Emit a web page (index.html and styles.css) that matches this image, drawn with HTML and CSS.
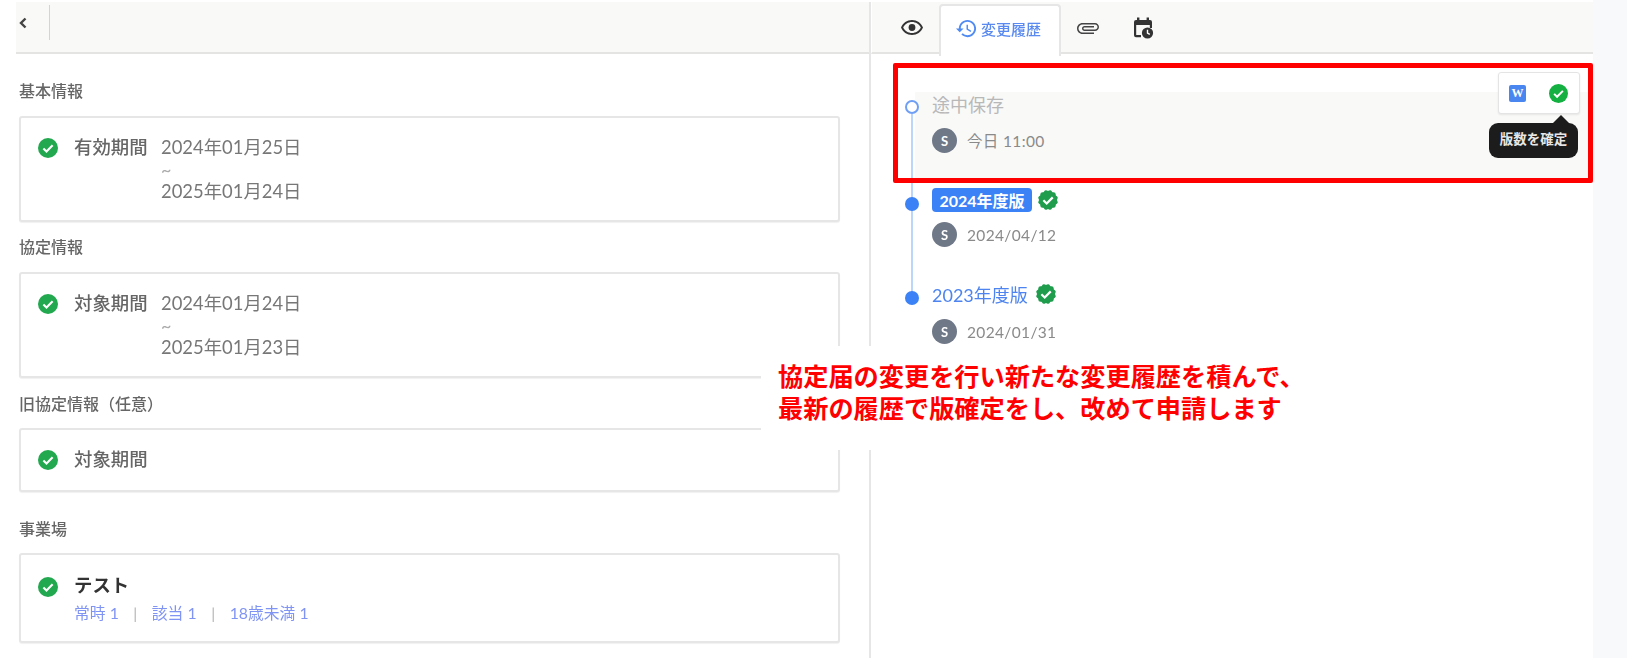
FILE: index.html
```html
<!DOCTYPE html>
<html lang="ja">
<head>
<meta charset="utf-8">
<title>変更履歴</title>
<link rel="stylesheet" href="styles.css">
</head>
<body>
<svg class="defs" width="0" height="0" aria-hidden="true">
  <defs>
    <symbol id="check" viewBox="0 0 20 20">
      <circle cx="10" cy="10" r="10" fill="currentColor"/>
      <path d="M5.4 10.4l3.1 3 6.1-6.2" fill="none" stroke="#fff" stroke-width="2.1"/>
    </symbol>
    <symbol id="seal" viewBox="0 0 20 20">
      <g fill="#1f9d4d">
        <rect x="3" y="3" width="14" height="14" rx="2"/>
        <rect x="3" y="3" width="14" height="14" rx="2" transform="rotate(30 10 10)"/>
        <rect x="3" y="3" width="14" height="14" rx="2" transform="rotate(60 10 10)"/>
      </g>
      <path d="M5.8 10.3l3 2.9 5.5-5.6" fill="none" stroke="#fff" stroke-width="2"/>
    </symbol>
  </defs>
</svg>
<div class="page">
  <section class="left">
    <header class="left-bar">
      <svg class="chevron" viewBox="0 0 10 12" width="10" height="12"><path d="M7.5 1.5L3 6l4.5 4.5" fill="none" stroke="#444" stroke-width="2.4"/></svg>
      <span class="bar-divider"></span>
    </header>
    <div class="left-body">
      <h3 class="sec-title t1">基本情報</h3>
      <div class="card">
        <svg class="ok"><use href="#check"/></svg>
        <span class="label">有効期間</span>
        <div class="dates"><div>2024年01月25日</div><div class="tilde">~</div><div>2025年01月24日</div></div>
      </div>
      <h3 class="sec-title t2">協定情報</h3>
      <div class="card">
        <svg class="ok"><use href="#check"/></svg>
        <span class="label">対象期間</span>
        <div class="dates"><div>2024年01月24日</div><div class="tilde">~</div><div>2025年01月23日</div></div>
      </div>
      <h3 class="sec-title t3">旧協定情報（任意）</h3>
      <div class="card card-single">
        <svg class="ok"><use href="#check"/></svg>
        <span class="label">対象期間</span>
      </div>
      <h3 class="sec-title t4">事業場</h3>
      <div class="card card-site">
        <svg class="ok"><use href="#check"/></svg>
        <div class="site">
          <div class="site-name">テスト</div>
          <div class="site-meta"><span>常時 1</span><i>|</i><span>該当 1</span><i>|</i><span>18歳未満 1</span></div>
        </div>
      </div>
    </div>
  </section>
  <section class="right">
    <nav class="tabs">
      <span class="tab-icon eye"><svg viewBox="0 0 24 24" width="24" height="24"><path fill="#333" d="M12 6c3.79 0 7.17 2.13 8.82 5.5C19.17 14.87 15.79 17 12 17s-7.17-2.13-8.82-5.5C4.83 8.13 8.21 6 12 6m0-2C7 4 2.73 7.11 1 11.5 2.73 15.89 7 19 12 19s9.27-3.11 11-7.5C21.27 7.11 17 4 12 4zm0 5c1.38 0 2.5 1.12 2.5 2.5S13.38 14 12 14s-2.5-1.12-2.5-2.5S10.62 9 12 9zm0 0"/><circle cx="12" cy="11.5" r="3.4" fill="#333"/></svg></span>
      <span class="tab-active">
        <svg viewBox="0 0 24 24" width="23" height="23"><path fill="#4f8bf2" d="M13 3c-4.97 0-9 4.03-9 9H1l3.89 3.89.07.14L9 12H6c0-3.87 3.13-7 7-7s7 3.13 7 7-3.13 7-7 7c-1.93 0-3.68-.79-4.94-2.06l-1.42 1.42C8.27 19.99 10.51 21 13 21c4.97 0 9-4.03 9-9s-4.03-9-9-9zm-1 5v5l4.28 2.54.72-1.21-3.5-2.08V8H12z"/></svg>
        変更履歴
      </span>
      <span class="tab-icon clip"><svg viewBox="0 0 24 24" width="24" height="24"><path fill="#444" transform="rotate(90 12 12)" d="M16.5 6v11.5c0 2.21-1.79 4-4 4s-4-1.79-4-4V5c0-1.38 1.12-2.5 2.5-2.5s2.5 1.12 2.5 2.5v10.5c0 .55-.45 1-1 1s-1-.45-1-1V6H10v9.5c0 1.38 1.12 2.5 2.5 2.5s2.5-1.12 2.5-2.5V5c0-2.21-1.79-4-4-4S7 2.79 7 5v12.5c0 3.04 2.46 5.5 5.5 5.5s5.5-2.46 5.5-5.5V6h-1.5z"/></svg></span>
      <span class="tab-icon cal"><svg viewBox="0 0 24 24" width="24" height="24"><path fill="#333" d="M6 1.5h2.4V4h7.2V1.5H18V4h1a2 2 0 0 1 2 2v6h-2.2V9H5.2v10H10v2.2H5a2 2 0 0 1-2-2V6a2 2 0 0 1 2-2h1z"/><circle cx="16.5" cy="17" r="5.6" fill="#333"/><path d="M16.5 13.8V17l2.3 1.4" fill="none" stroke="#fff" stroke-width="1.4"/></svg></span>
    </nav>
    <div class="timeline">
      <span class="rail"></span>
      <article class="item item-draft">
        <span class="dot dot-open"></span>
        <div class="draft-title">途中保存</div>
        <div class="who"><span class="avatar">S</span><span class="when">今日 11:00</span></div>
      </article>
      <article class="item item-badge">
        <span class="dot dot-a"></span>
        <div class="ver"><span class="badge">2024年度版</span><svg class="seal"><use href="#seal"/></svg></div>
        <div class="who"><span class="avatar">S</span><span class="when">2024/04/12</span></div>
      </article>
      <article class="item item-plain">
        <span class="dot dot-b"></span>
        <div class="ver"><span class="ver-link">2023年度版</span><svg class="seal"><use href="#seal"/></svg></div>
        <div class="who"><span class="avatar">S</span><span class="when">2024/01/31</span></div>
      </article>
      <div class="red-box"></div>
      <div class="popup">
        <span class="word">W</span>
        <svg class="confirm"><use href="#check"/></svg>
      </div>
      <div class="tooltip">版数を確定</div>
    </div>
  </section>
  <aside class="gutter"></aside>
  <div class="note">協定届の変更を行い新たな変更履歴を積んで、<br>最新の履歴で版確定をし、改めて申請します</div>
</div>
</body>
</html>
```

FILE: styles.css
```css
* { box-sizing: border-box; }
html, body { margin: 0; padding: 0; height: 100%; overflow: hidden; background: #fff; }
body { font-family: Lato, "Noto Sans CJK JP", sans-serif; }
.defs { position: absolute; }

.page {
  position: relative;
  display: flex;
  width: 1627px;
  height: 658px;
  padding-top: 2px;
  padding-left: 16px;
  filter: blur(0.6px);
  overflow: hidden;
}

/* left */
.left { width: 853px; flex: none; }
.left-bar {
  display: flex;
  align-items: flex-start;
  height: 52px;
  background: #f9f9f8;
  border-bottom: 2px solid #e4e4e2;
}
.chevron { margin: 15px 0 0 2px; }
.bar-divider { width: 1px; height: 35px; margin: 3px 0 0 21px; background: #d4d4d4; }
.left-body { padding: 0 0 0 3px; }
.sec-title { margin: 0; font-size: 16px; line-height: 20px; font-weight: 500; color: #666; }
.t1 { margin-top: 27px; margin-bottom: 15px; }
.t2 { margin-top: 15px; margin-bottom: 15px; }
.t3 { margin-top: 16px; margin-bottom: 14px; }
.t4 { margin-top: 27px; margin-bottom: 14px; }

.card {
  display: flex;
  align-items: flex-start;
  width: 821px;
  padding: 18px 0 18px 17px;
  background: #fff;
  border: 2px solid #e6e6e6;
  border-radius: 3px;
  box-shadow: 0 1px 1px rgba(0, 0, 0, .06);
  font-size: 18.4px;
  line-height: 22px;
}
.card-single { height: 64px; }
.card-site { height: 90px; padding-top: 20px; }
.ok { width: 20px; height: 20px; margin: 2px 16px 0 0; color: #22a84f; flex: none; }
.label { width: 87px; flex: none; color: #666; font-weight: 500; }
.dates { color: #777; }
.tilde { font-size: 18px; line-height: 22px; color: #aaa; }
.site-name { font-size: 18.4px; line-height: 22px; margin-top: -1px; font-weight: 700; color: #333; }
.site-meta { display: flex; margin-top: 7px; font-size: 15.8px; line-height: 20px; color: #8094f4; }
.site-meta i { width: 33px; text-align: center; font-style: normal; color: #b5b5b5; }

/* right */
.right {
  position: relative;
  width: 724px;
  flex: none;
  border-left: 2px solid #e6e6e6;
}
.tabs {
  display: flex;
  align-items: flex-start;
  height: 52px;
  background: #f9f9f8;
  border-left: 1px solid #fff;
  border-bottom: 2px solid #e4e4e2;
}
.tab-icon { display: flex; margin-top: 14px; }
.eye { margin-left: 28px; }
.tab-active {
  display: flex;
  align-items: center;
  gap: 3px;
  width: 122px;
  height: 52px;
  margin: 2px 0 -2px 15px;
  padding: 0 0 5px 14px;
  background: #fff;
  border: 2px solid #e6e6e6;
  border-bottom: 0;
  border-radius: 4px 4px 0 0;
  font-size: 15px;
  font-weight: 500;
  color: #5a8af0;
}
.clip { margin-left: 15px; }
.cal { margin-left: 31px; }

.timeline { position: relative; padding: 39px 0 0 44px; }
.rail { position: absolute; left: 40px; top: 60px; width: 2px; height: 184px; background: #bcd5fb; }
.item { position: relative; }
.dot { position: absolute; border-radius: 50%; background: #3b82f6; }
.dot-open { left: -10px; top: 8px; width: 14px; height: 14px; background: #fff; border: 2px solid #6f9ff5; }
.dot-a { left: -10px; top: 15px; width: 14px; height: 14px; }
.dot-b { left: -10px; top: 10px; width: 14px; height: 14px; }

.item-draft { height: 90px; padding-left: 17px; background: #f9f9f8; }
.item-badge { height: 99px; padding: 6px 0 0 17px; }
.item-plain { padding-left: 17px; }
.item-plain .who { margin-top: 12px; }
.draft-title { margin-top: -1px; font-size: 18px; line-height: 26px; color: #b8b8b8; }
.item-draft .who { margin-top: 10px; }
.ver { display: flex; align-items: center; height: 26px; }
.item-badge .ver { height: 24px; }
.badge {
  display: flex;
  align-items: center;
  justify-content: center;
  width: 100px;
  height: 24px;
  border-radius: 4px;
  background: #3b82f6;
  color: #fff;
  font-size: 16px;
  font-weight: 700;
}
.ver-link { width: 98px; font-size: 18px; color: #4d84f0; }
.seal { width: 22px; height: 22px; margin-left: 5px; }
.item-plain .seal { margin-left: 5px; }
.who { display: flex; align-items: center; gap: 10px; margin-top: 10px; }
.avatar {
  display: flex;
  align-items: center;
  justify-content: center;
  width: 25px;
  height: 25px;
  border-radius: 50%;
  background: #6f7887;
  color: #fff;
  font-size: 13px;
  font-weight: 700;
}
.when { font-size: 15.5px; line-height: 20px; color: #8a8a8a; letter-spacing: .35px; }

.red-box {
  position: absolute;
  left: 22px;
  top: 9px;
  width: 700px;
  height: 120px;
  border: 5px solid #f00;
  border-radius: 2px;
}
.popup {
  position: absolute;
  left: 627px;
  top: 18px;
  display: flex;
  align-items: center;
  width: 82px;
  height: 42px;
  padding-left: 10px;
  background: #fff;
  border: 1px solid #e4e4e4;
  border-radius: 3px;
  box-shadow: 0 1px 2px rgba(0, 0, 0, .08);
}
.word {
  display: flex;
  align-items: center;
  justify-content: center;
  width: 17px;
  height: 17px;
  border-radius: 2px;
  background: #4a86f0;
  color: #fff;
  font-family: "Liberation Serif", serif;
  font-size: 12px;
  font-weight: 700;
}
.confirm { width: 19px; height: 19px; margin-left: 23px; color: #14b041; }
.tooltip {
  position: absolute;
  left: 618px;
  top: 69px;
  width: 89px;
  height: 35px;
  border-radius: 9px;
  background: #1c1c1c;
  color: #e6e6e6;
  font-size: 13.5px;
  font-weight: 700;
  line-height: 33px;
  text-align: center;
}
.tooltip::before {
  content: "";
  position: absolute;
  left: 64px;
  top: -8px;
  border: 8px solid transparent;
  border-top: 0;
  border-bottom-color: #1c1c1c;
}

.gutter { flex: 1; margin-top: -2px; background: #f8f9fb; }

.note {
  position: absolute;
  left: 761px;
  top: 346px;
  width: 560px;
  height: 104px;
  padding: 13px 0 0 17px;
  background: #fff;
  color: #f00;
  font-family: "Noto Sans CJK JP", sans-serif;
  font-size: 25.2px;
  font-weight: 700;
  line-height: 32px;
  white-space: nowrap;
}
```
